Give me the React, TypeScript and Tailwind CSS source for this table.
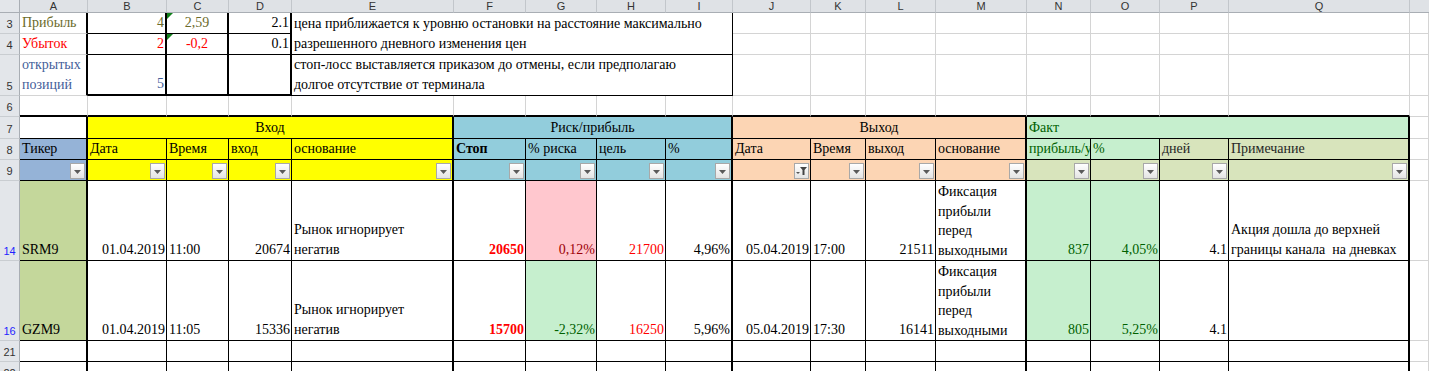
import React from 'react';

const COL_W = [
  'w-[20px]', 'w-[68px]', 'w-[79px]', 'w-[62px]', 'w-[63px]', 'w-[162px]',
  'w-[72px]', 'w-[71px]', 'w-[69px]', 'w-[67px]', 'w-[78px]', 'w-[55px]',
  'w-[70px]', 'w-[91px]', 'w-[64px]', 'w-[69px]', 'w-[69px]', 'w-[181px]', 'w-[19px]',
];
const LETTERS = ['A', 'B', 'C', 'D', 'E', 'F', 'G', 'H', 'I', 'J', 'K', 'L', 'M', 'N', 'O', 'P', 'Q'];

type Edge = 'g' | 'k' | 'K';
const R: Record<Edge, string> = {
  g: 'border-r border-r-[#d4d4d4]',
  k: 'border-r border-r-black',
  K: 'border-r-2 border-r-black',
};
const B: Record<Edge, string> = {
  g: 'border-b border-b-[#d4d4d4]',
  k: 'border-b border-b-black',
  K: 'border-b-2 border-b-black',
};

interface CellProps {
  r?: Edge;
  b?: Edge;
  className?: string;
  colSpan?: number;
  rowSpan?: number;
  children?: React.ReactNode;
}

function Cell({ r = 'g', b = 'g', className = '', colSpan, rowSpan, children }: CellProps) {
  return (
    <td
      colSpan={colSpan}
      rowSpan={rowSpan}
      className={`${R[r]} ${B[b]} relative overflow-hidden whitespace-nowrap p-0 align-bottom ${className}`}
    >
      {children}
    </td>
  );
}

function RowNum({ n, blue }: { n: number; blue?: boolean }) {
  return (
    <td
      className={`border-r border-b border-r-[#a9aeb4] border-b-[#c9cdd1] bg-[#e3e6ea] p-0 pb-[2px] text-center align-bottom [font-family:'Liberation_Sans',sans-serif] text-[11px] leading-[13px] ${
        blue ? 'text-[#1f1fff]' : 'text-[#333]'
      }`}
    >
      {n}
    </td>
  );
}

function Marker() {
  return (
    <svg className="absolute left-0 top-0" width="6" height="6" viewBox="0 0 6 6">
      <polygon points="0,0 6,0 0,6" fill="#12801c" />
    </svg>
  );
}

function Filter({ active }: { active?: boolean }) {
  return (
    <div className="flex justify-end pb-[1px] pr-[1px]">
      <div className="flex h-[16px] w-[15px] items-center justify-center border border-[#a8a8a8] bg-gradient-to-b from-white to-[#e4e4e4]">
        {active ? (
          <svg width="13" height="10" viewBox="0 0 13 10">
            <polygon points="1,6 5,6 3,8" fill="#555" />
            <polygon points="5,1 12,1 9.5,4 9.5,9 7.5,9 7.5,4" fill="#444" />
          </svg>
        ) : (
          <svg width="7" height="4" viewBox="0 0 7 4" className="mt-[2px]">
            <polygon points="0,0 7,0 3.5,4" fill="#5a5a5a" />
          </svg>
        )}
      </div>
    </div>
  );
}

// text alignment helpers
const L = 'pl-[2px] text-left';
const RT = 'pr-[1px] text-right';
const CT = 'text-center';

const OLIVE = 'text-[#6b6b2b]';
const SLATE = 'text-[#44609a]';

const YEL = 'bg-[#ffff00]';
const BLU = 'bg-[#92cddc]';
const PCH = 'bg-[#fcd5b4]';
const GRN = 'bg-[#c6efce]';
const OLV = 'bg-[#d8e4bc]';

function Grays({ count, b = 'g' }: { count: number; b?: Edge }) {
  return (
    <>
      {Array.from({ length: count }).map((_, i) => (
        <Cell key={i} b={b} />
      ))}
    </>
  );
}

// vertical edges for table rows A..Q
const TABLE_R: Edge[] = ['K', 'k', 'k', 'k', 'K', 'k', 'k', 'k', 'K', 'k', 'k', 'k', 'K', 'k', 'k', 'k', 'K'];

function EmptyTableRow({ n }: { n: number }) {
  return (
    <tr className="h-[21px]">
      <RowNum n={n} />
      {TABLE_R.map((r, i) => (
        <Cell key={i} r={r} b="k" />
      ))}
      <Cell />
    </tr>
  );
}

interface Trade {
  row: number;
  ticker: string;
  date: string;
  time: string;
  entry: string;
  stop: string;
  risk: string;
  riskGood: boolean;
  target: string;
  pct: string;
  exitDate: string;
  exitTime: string;
  exit: string;
  pnl: string;
  pnlPct: string;
  days: string;
  note?: React.ReactNode;
}

const TRADES: Trade[] = [
  {
    row: 14, ticker: 'SRM9', date: '01.04.2019', time: '11:00', entry: '20674', stop: '20650',
    risk: '0,12%', riskGood: false, target: '21700', pct: '4,96%', exitDate: '05.04.2019',
    exitTime: '17:00', exit: '21511', pnl: '837', pnlPct: '4,05%', days: '4.1',
    note: (
      <>
        Акция дошла до верхней
        <br />
        {'границы канала\u00a0 на дневках'}
      </>
    ),
  },
  {
    row: 16, ticker: 'GZM9', date: '01.04.2019', time: '11:05', entry: '15336', stop: '15700',
    risk: '-2,32%', riskGood: true, target: '16250', pct: '5,96%', exitDate: '05.04.2019',
    exitTime: '17:30', exit: '16141', pnl: '805', pnlPct: '5,25%', days: '4.1',
  },
];

function TradeRow({ t }: { t: Trade }) {
  return (
    <tr className="h-[80px]">
      <RowNum n={t.row} blue />
      <Cell r="K" b="k" className={`bg-[#c4d79b] ${L}`}>{t.ticker}</Cell>
      <Cell r="k" b="k" className={RT}>{t.date}</Cell>
      <Cell r="k" b="k" className={L}>{t.time}</Cell>
      <Cell r="k" b="k" className={RT}>{t.entry}</Cell>
      <Cell r="K" b="k" className={L}>
        Рынок игнорирует
        <br />
        негатив
      </Cell>
      <Cell r="k" b="k" className={`${RT} font-bold text-[#ff0000]`}>{t.stop}</Cell>
      <Cell
        r="k"
        b="k"
        className={`${RT} ${t.riskGood ? 'bg-[#c6efce] text-[#006100]' : 'bg-[#ffc7ce] text-[#9c0006]'}`}
      >
        {t.risk}
      </Cell>
      <Cell r="k" b="k" className={`${RT} text-[#ff0000]`}>{t.target}</Cell>
      <Cell r="K" b="k" className={RT}>{t.pct}</Cell>
      <Cell r="k" b="k" className={RT}>{t.exitDate}</Cell>
      <Cell r="k" b="k" className={L}>{t.exitTime}</Cell>
      <Cell r="k" b="k" className={RT}>{t.exit}</Cell>
      <Cell r="K" b="k" className={`${L} leading-[19.5px]`}>
        Фиксация
        <br />
        прибыли
        <br />
        перед
        <br />
        выходными
      </Cell>
      <Cell r="k" b="k" className={`${RT} ${GRN} text-[#006100]`}>{t.pnl}</Cell>
      <Cell r="k" b="k" className={`${RT} ${GRN} text-[#006100]`}>{t.pnlPct}</Cell>
      <Cell r="k" b="k" className={RT}>{t.days}</Cell>
      <Cell r="K" b="k" className={L}>{t.note}</Cell>
      <Cell />
    </tr>
  );
}

export default function App() {
  return (
    <div className="h-[371px] w-[1429px] overflow-hidden bg-white">
      <table className="w-[1429px] table-fixed border-separate border-spacing-0 [font-family:'Liberation_Serif',serif] text-[14px] leading-[20px] text-black">
        <colgroup>
          {COL_W.map((w, i) => (
            <col key={i} className={w} />
          ))}
        </colgroup>
        <tbody>
          {/* column letters */}
          <tr className="h-[13px]">
            <td className="border-r border-b border-r-[#a9aeb4] border-b-[#a9aeb4] bg-[#e3e6ea] p-0" />
            {LETTERS.map((l) => (
              <td
                key={l}
                className="border-r border-b border-r-[#c2c6cb] border-b-[#a9aeb4] bg-[#dfe2e6] p-0 text-center align-bottom [font-family:'Liberation_Sans',sans-serif] text-[11px] leading-[12px] text-[#333]"
              >
                {l}
              </td>
            ))}
            <td className="border-b border-b-[#a9aeb4] bg-[#dfe2e6] p-0" />
          </tr>

          {/* summary block */}
          <tr className="h-[21px]">
            <RowNum n={3} />
            <Cell r="K" className={`${L} ${OLIVE}`}>Прибыль</Cell>
            <Cell r="K" b="k" className={`${RT} ${OLIVE}`}>4</Cell>
            <Cell r="K" b="k" className={`${CT} ${OLIVE}`}>
              <Marker />
              2,59
            </Cell>
            <Cell r="K" b="k" className={RT}>2.1</Cell>
            <Cell r="k" b="k" colSpan={5} rowSpan={2} className={L}>
              цена приближается к уровню остановки на расстояние максимально
              <br />
              разрешенного дневного изменения цен
            </Cell>
            <Grays count={9} />
          </tr>
          <tr className="h-[21px]">
            <RowNum n={4} />
            <Cell r="K" className={`${L} text-[#ff0000]`}>Убыток</Cell>
            <Cell r="K" b="k" className={`${RT} text-[#ff0000]`}>2</Cell>
            <Cell r="K" b="k" className={`${CT} text-[#ff0000]`}>
              <Marker />
              -0,2
            </Cell>
            <Cell r="K" b="k" className={RT}>0.1</Cell>
            <Grays count={9} />
          </tr>
          <tr className="h-[41px]">
            <RowNum n={5} />
            <Cell r="K" className={`${L} ${SLATE}`}>
              открытых
              <br />
              позиций
            </Cell>
            <Cell r="K" b="K" className={`${RT} ${SLATE}`}>5</Cell>
            <Cell r="K" b="K" />
            <Cell r="K" b="K" />
            <Cell r="k" b="k" colSpan={5} className={L}>
              стоп-лосс выставляется приказом до отмены, если предполагаю
              <br />
              долгое отсутствие от терминала
            </Cell>
            <Grays count={9} />
          </tr>
          <tr className="h-[21px]">
            <RowNum n={6} />
            <Grays count={17} b="K" />
            <Cell />
          </tr>

          {/* journal header */}
          <tr className="h-[22px]">
            <RowNum n={7} />
            <Cell r="K" b="k" />
            <Cell r="K" b="k" colSpan={4} className={`${YEL} ${CT}`}>Вход</Cell>
            <Cell r="K" b="k" colSpan={4} className={`${BLU} ${CT}`}>Риск/прибыль</Cell>
            <Cell r="K" b="k" colSpan={4} className={`${PCH} ${CT}`}>Выход</Cell>
            <Cell r="K" b="k" colSpan={4} className={`${GRN} ${L} text-[#006100]`}>Факт</Cell>
            <Cell />
          </tr>
          <tr className="h-[21px]">
            <RowNum n={8} />
            <Cell r="K" b="k" className={`bg-[#95b3d7] ${L}`}>Тикер</Cell>
            <Cell r="k" b="k" className={`${YEL} ${L}`}>Дата</Cell>
            <Cell r="k" b="k" className={`${YEL} ${L}`}>Время</Cell>
            <Cell r="k" b="k" className={`${YEL} ${L}`}>вход</Cell>
            <Cell r="K" b="k" className={`${YEL} ${L}`}>основание</Cell>
            <Cell r="k" b="k" className={`${BLU} ${L} font-bold`}>Стоп</Cell>
            <Cell r="k" b="k" className={`${BLU} ${L}`}>% риска</Cell>
            <Cell r="k" b="k" className={`${BLU} ${L}`}>цель</Cell>
            <Cell r="K" b="k" className={`${BLU} ${L}`}>%</Cell>
            <Cell r="k" b="k" className={`${PCH} ${L}`}>Дата</Cell>
            <Cell r="k" b="k" className={`${PCH} ${L}`}>Время</Cell>
            <Cell r="k" b="k" className={`${PCH} ${L}`}>выход</Cell>
            <Cell r="K" b="k" className={`${PCH} ${L}`}>основание</Cell>
            <Cell r="k" b="k" className={`${GRN} ${L} text-[#006100]`}>прибыль/убыток</Cell>
            <Cell r="k" b="k" className={`${GRN} ${L} text-[#006100]`}>%</Cell>
            <Cell r="k" b="k" className={`${OLV} ${L} text-[#262626]`}>дней</Cell>
            <Cell r="K" b="k" className={`${OLV} ${L} text-[#262626]`}>Примечание</Cell>
            <Cell />
          </tr>
          <tr className="h-[21px]">
            <RowNum n={9} />
            {[
              'bg-[#95b3d7]', YEL, YEL, YEL, YEL, BLU, BLU, BLU, BLU,
              PCH, PCH, PCH, PCH, OLV, OLV, OLV, OLV,
            ].map((bg, i) => (
              <Cell key={i} r={TABLE_R[i]} b="k" className={bg}>
                <Filter active={i === 9} />
              </Cell>
            ))}
            <Cell />
          </tr>

          {TRADES.map((t) => (
            <TradeRow key={t.row} t={t} />
          ))}

          <EmptyTableRow n={21} />
          <EmptyTableRow n={22} />
        </tbody>
      </table>
    </div>
  );
}
